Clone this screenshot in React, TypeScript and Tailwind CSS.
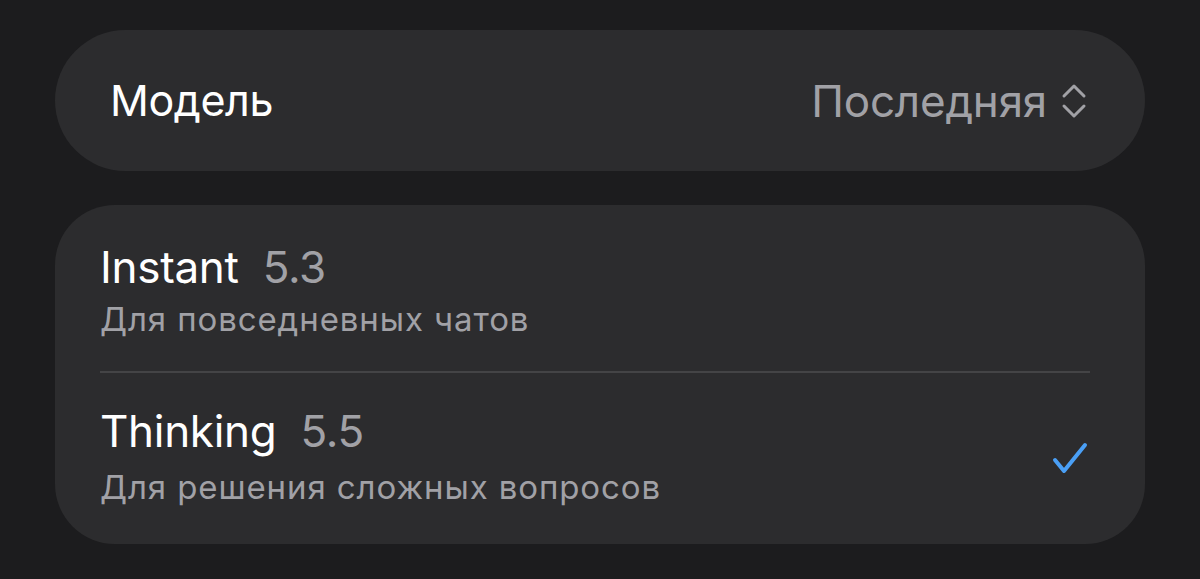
import React from "react";

const models = [
  { name: "Instant", version: "5.3", desc: "Для повседневных чатов", selected: false },
  { name: "Thinking", version: "5.5", desc: "Для решения сложных вопросов", selected: true },
];

function UpDown() {
  return (
    <svg width="26" height="40" viewBox="0 0 26 40" fill="none" stroke="#a1a1a6" strokeWidth="3" strokeLinecap="round" strokeLinejoin="round">
      <path d="M3 15 L13 5 L23 15" />
      <path d="M3 25 L13 35 L23 25" />
    </svg>
  );
}

function Check() {
  return (
    <svg width="36" height="34" viewBox="0 0 36 34" fill="none" stroke="#4a9ff5" strokeWidth="4" strokeLinecap="round" strokeLinejoin="round">
      <path d="M3 18 L12 29 L33 3" />
    </svg>
  );
}

export default function App() {
  return (
    <div
      className="min-h-screen w-full bg-[#1c1c1e] px-[55px] pt-[30px]"
      style={{ fontFamily: "Inter, 'Noto Sans', sans-serif" }}
    >
      <div className="flex h-[141px] items-center justify-between rounded-full bg-[#2c2c2e] pl-[55px] pr-[58px]">
        <span className="text-[43px] leading-none tracking-[-0.4px] text-white">Модель</span>
        <div className="flex items-center gap-[14px]">
          <span className="text-[44px] leading-none tracking-[-0.2px] text-[#a1a1a6]">Последняя</span>
          <UpDown />
        </div>
      </div>

      <div className="mt-[34px] rounded-[60px] bg-[#2c2c2e] pl-[45px] pr-[55px]">
        {models.map((m, i) => (
          <div
            key={m.name}
            className={`flex items-center justify-between ${i > 0 ? "border-t-2 border-[#444446]" : ""} ${i === 0 ? "pt-[36px] pb-[32px]" : "pt-[32px] pb-[37px]"}`}
          >
            <div className="flex flex-col">
              <div className="flex items-baseline gap-[24px]">
                <span className="text-[44px] leading-[52px] tracking-[-0.3px] text-white">{m.name}</span>
                <span className="text-[44px] leading-[52px] tracking-[-0.3px] text-[#a1a1a6]">{m.version}</span>
              </div>
              <span className={`${i === 0 ? "mt-[6px]" : "mt-[10px]"} text-[33px] leading-[40px] tracking-[0.9px] text-[#a1a1a6]`}>{m.desc}</span>
            </div>
            {m.selected && (
              <div className="mr-[2px] mt-[6px]">
                <Check />
              </div>
            )}
          </div>
        ))}
      </div>
    </div>
  );
}
